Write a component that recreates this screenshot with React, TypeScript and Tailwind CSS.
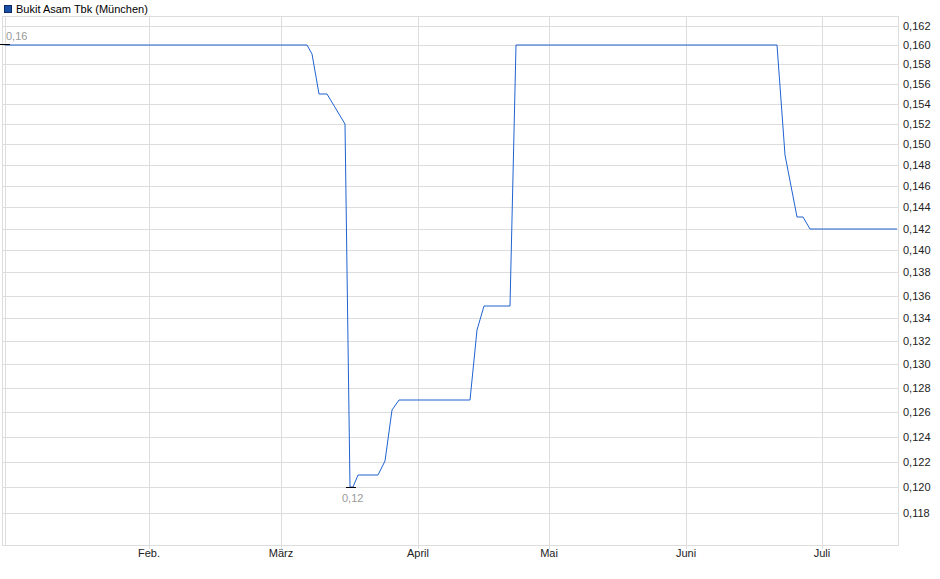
export default function App() {
  const ys = [26,45,64,84,104,124,144,165,186,207,229,250,272,296,318,341,364,388,412,437,462,487,513];
  const ticks = ys.map((y, i) => ({ y, label: (0.162 - i * 0.002).toFixed(3).replace(".", ",") }));
  const vx = [149, 281, 418, 549, 686, 822];
  const months = ["Feb.", "März", "April", "Mai", "Juni", "Juli"];
  const pts = [[5,45],[307,45],[312,54],[319,94],[327,94],[345,124],[350,487],[353,487],[358,475],[378,475],[385,461],[392,410],[399,400],[470,400],[477,330],[484,306],[510,306],[516,45],[777,45],[785,155],[797,217],[803,217],[810,229],[897,229]];
  return (
    <div className="relative w-[940px] h-[579px] bg-white overflow-hidden" style={{ fontFamily: '"Liberation Sans", Arial, sans-serif' }}>
      <div className="flex items-center gap-1 pl-[4px] pt-[1px] text-[11px] text-black">
        <span className="inline-block w-[8px] h-[8px] bg-[#1a4fa8] border border-[#0d2a66]"></span>
        <span>Bukit Asam Tbk (München)</span>
      </div>
      <svg className="absolute left-0 top-0" width="940" height="579">
        <rect x="2.5" y="16.5" width="896" height="529" fill="none" stroke="#ddd" />
        <line x1="5.5" y1="16" x2="5.5" y2="546" stroke="#ddd" />
        {ticks.map((t) => (
          <g key={t.label}>
            <line x1="3" x2="898" y1={t.y + 0.5} y2={t.y + 0.5} stroke="#ddd" />
            <text x="903" y={t.y + 4} fontSize="11" fill="#222">{t.label}</text>
          </g>
        ))}
        {vx.map((x, i) => (
          <g key={x}>
            <line x1={x + 0.5} x2={x + 0.5} y1="16" y2="549" stroke="#ddd" />
            <text x={x} y="557" fontSize="11" fill="#222" textAnchor="middle">{months[i]}</text>
          </g>
        ))}
        <polyline points={pts.map((p) => p.join(",")).join(" ")} fill="none" stroke="#1f63d0" strokeWidth="1" />
        <line x1="0" x2="10" y1="44.5" y2="44.5" stroke="#000" />
        <line x1="346" x2="356" y1="487.5" y2="487.5" stroke="#000" />
        <text x="6" y="40" fontSize="11" fill="#999">0,16</text>
        <text x="342" y="502" fontSize="11" fill="#999">0,12</text>
      </svg>
    </div>
  );
}
